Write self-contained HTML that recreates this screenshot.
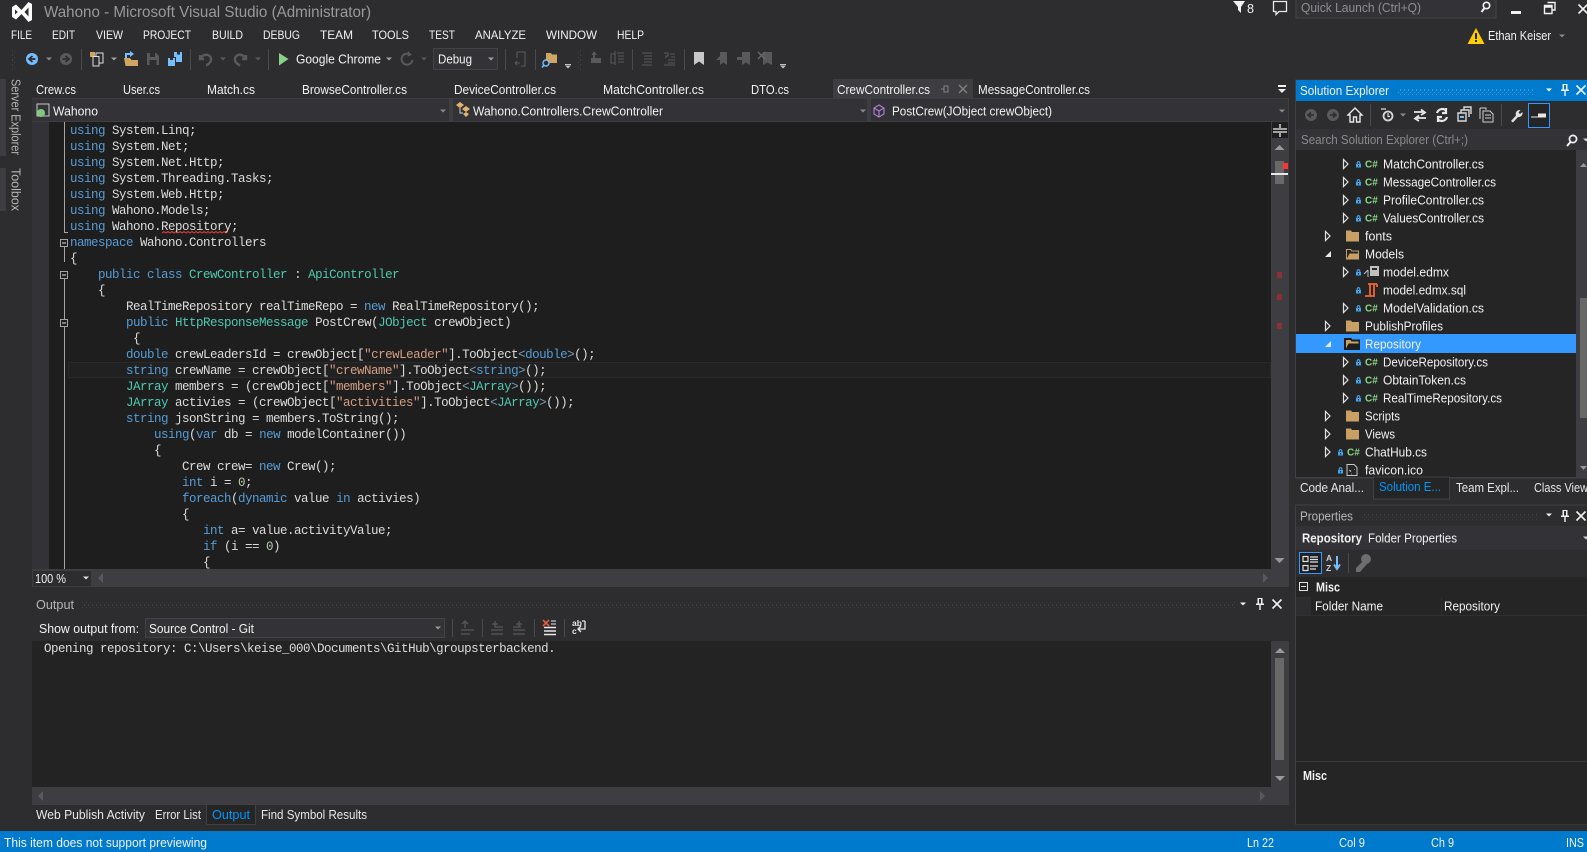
<!DOCTYPE html>
<html lang="en"><head><meta charset="utf-8"><title>Wahono - Microsoft Visual Studio</title>
<style>
html,body{margin:0;padding:0;background:#2d2d30;width:1587px;height:852px;overflow:hidden}
svg{display:block;position:absolute;left:0;top:0}
text{font-family:"Liberation Sans",Arial,sans-serif;font-size:12.5px;fill:#f1f1f1;white-space:pre}
.t{fill:#e6e6e6}.d{fill:#b5b5b5}.g{fill:#8f8f8f}.b{font-weight:bold}
.c text,.c{font-family:"Liberation Mono",monospace;font-size:12.5px;letter-spacing:-.5px;fill:#dcdcdc}
.k{fill:#569cd6}.y{fill:#4ec9b0}.s{fill:#d69d85}.n{fill:#b5cea8}.a{fill:#7d9bb3}
.m{font-size:12px;fill:#f1f1f1}
.dim{fill:#59595c}.dims{stroke:#59595c;fill:none;stroke-width:1.5}
.sep{fill:#4a4a4e}
.w{fill:#e8e8e8}
.cs{font-size:10px;font-weight:bold;fill:#85d885}
</style></head><body>
<svg width="1587" height="852" viewBox="0 0 1587 852" xmlns="http://www.w3.org/2000/svg">
<defs>
<pattern id="dg" width="4" height="5" patternUnits="userSpaceOnUse"><rect width="1" height="1" fill="#3f3f43"/><rect x="2" y="2" width="1" height="1" fill="#3f3f43"/><rect y="4" width="1" height="1" fill="#3f3f43"/></pattern>
<pattern id="db" width="4" height="5" patternUnits="userSpaceOnUse"><rect width="1" height="1" fill="#3a9ad9"/><rect x="2" y="2" width="1" height="1" fill="#3a9ad9"/><rect y="4" width="1" height="1" fill="#3a9ad9"/></pattern>
<g id="dd"><path d="M-3 -1.5H3L0 1.5Z"/></g>
<g id="lk"><path d="M1.2 5V4A1.300 1.300 0 0 1 3.800 4V5" fill="none" stroke="#3fa7f0" stroke-width="1.100"/><rect x="0" y="5" width="5" height="3.500" fill="#3fa7f0"/><rect x="2" y="6" width="1" height="1.500" fill="#252526"/></g>
<path id="tc" d="M0.5 -4.5V4.5L5 0Z" fill="none" stroke="#e0e0e0" stroke-width="1.2"/>
<path id="te" d="M0 3H6V-3Z" fill="#e8e8e8"/>
<path id="fc" d="M0 -5.500H5L6 -4H13V5.500H0Z" fill="#c8a064"/>
<path id="fo" d="M0 5.500V-5H5L6 -3.500H13V5.500ZM1 4.500 3.500 -.5H12V-2.500H5.500L4.500 -4H1Z" fill="#c8a064" fill-rule="evenodd"/>
<g id="pin"><path d="M-2.5 -6H2.5V-.5H4V1H.7V6H-.7V1H-4V-.5H-2.5ZM-1 -5V-.5H1V-5Z" fill="#f1f1f1" fill-rule="evenodd"/></g>
<path id="x" d="M-4.5 -4.5 4.5 4.5M4.5 -4.5 -4.5 4.5" stroke="#f1f1f1" stroke-width="1.6" fill="none"/>
</defs>

<rect width="1587" height="852" fill="#2d2d30"/>

<!-- title bar -->
<path d="M12 7 16 4.5 21.5 10 28.5 2 32 4V20L28.5 22 21.5 14 16 19.5 12 17ZM15 9.5V14.5L17.8 12ZM28.5 7.5 24.5 12 28.5 16.5Z" fill="#fff" fill-rule="evenodd"/>
<text x="44" y="17" textLength="327" lengthAdjust="spacingAndGlyphs" style="font-size:16px;fill:#999">Wahono - Microsoft Visual Studio (Administrator)</text>
<path d="M1233 1H1245L1241 7V13L1238 10V7Z" fill="#f1f1f1"/>
<text x="1247" y="13" textLength="7" lengthAdjust="spacingAndGlyphs">8</text>
<path d="M1273.5 1.5H1286.5V11.5H1279L1276 14.5V11.5H1273.5Z" fill="none" stroke="#e8e8e8" stroke-width="1.3"/>
<rect x="1296" y="-1" width="200" height="19" fill="#333337" stroke="#434346"/>
<text x="1301" y="12" textLength="120" lengthAdjust="spacingAndGlyphs" class="g">Quick Launch (Ctrl+Q)</text>
<circle cx="1486.5" cy="5.5" r="3.2" fill="none" stroke="#f1f1f1" stroke-width="1.6"/><path d="M1484.5 8 1481.5 12" stroke="#f1f1f1" stroke-width="2"/>
<rect x="1511" y="11" width="10" height="3" fill="#f1f1f1"/>
<path d="M1547.5 2.5H1555V10H1552.5M1544.5 5.5H1552V13.5H1544.5ZM1544.5 7H1552" fill="none" stroke="#f1f1f1" stroke-width="1.4"/>
<use href="#x" x="1583" y="9"/>

<!-- menu -->
<g class="mm">
<text class="m" x="11" y="39" textLength="21" lengthAdjust="spacingAndGlyphs">FILE</text>
<text class="m" x="52" y="39" textLength="23" lengthAdjust="spacingAndGlyphs">EDIT</text>
<text class="m" x="96" y="39" textLength="27" lengthAdjust="spacingAndGlyphs">VIEW</text>
<text class="m" x="143" y="39" textLength="48" lengthAdjust="spacingAndGlyphs">PROJECT</text>
<text class="m" x="212" y="39" textLength="31" lengthAdjust="spacingAndGlyphs">BUILD</text>
<text class="m" x="263" y="39" textLength="37" lengthAdjust="spacingAndGlyphs">DEBUG</text>
<text class="m" x="320" y="39" textLength="33" lengthAdjust="spacingAndGlyphs">TEAM</text>
<text class="m" x="372" y="39" textLength="37" lengthAdjust="spacingAndGlyphs">TOOLS</text>
<text class="m" x="429" y="39" textLength="26" lengthAdjust="spacingAndGlyphs">TEST</text>
<text class="m" x="475" y="39" textLength="51" lengthAdjust="spacingAndGlyphs">ANALYZE</text>
<text class="m" x="546" y="39" textLength="51" lengthAdjust="spacingAndGlyphs">WINDOW</text>
<text class="m" x="617" y="39" textLength="27" lengthAdjust="spacingAndGlyphs">HELP</text>
</g>
<path d="M1476 28 1484.5 44H1467.5Z" fill="#ffcc00"/><rect x="1475" y="33" width="2" height="6" fill="#222"/><rect x="1475" y="40" width="2" height="2" fill="#222"/>
<text x="1488" y="40" textLength="63" lengthAdjust="spacingAndGlyphs">Ethan Keiser</text>
<use href="#dd" x="1562" y="36" fill="#8a8a8a"/>

<!-- toolbar -->
<rect x="12" y="50" width="4" height="20" fill="url(#dg)"/>
<circle cx="32" cy="59" r="6" fill="#75beff"/><path d="M35.5 59H30M32.5 56 29 59 32.5 62" stroke="#2d2d30" stroke-width="1.8" fill="none"/>
<use href="#dd" x="49" y="59" fill="#8a8a8a"/>
<circle cx="66" cy="59" r="6" fill="#59595c"/><path d="M62.5 59H68M65.5 56 69 59 65.5 62" stroke="#2d2d30" stroke-width="1.8" fill="none"/>
<rect x="81" y="49" width="1" height="21" class="sep"/>
<rect x="90" y="52" width="5" height="5" fill="#d0a564"/><path d="M93 56.5H99V66H93ZM96 56V53H103V63H99.5" fill="none" stroke="#e0e0e0" stroke-width="1"/>
<use href="#dd" x="114" y="59" fill="#a0a0a0"/>
<path d="M124 58H130L131.5 60H138V66H125.5Z" fill="#d0a564"/><path d="M126 58V54H131" fill="none" stroke="#75beff" stroke-width="2"/><path d="M130 51 134 54 130 57Z" fill="#75beff"/>
<path d="M147 53H156L159 56V65H147ZM150 53V57H155V53ZM149.5 60V65H156.5V60Z" fill="#59595c" fill-rule="evenodd"/>
<path d="M168 58H175V66H168ZM174 52H182V62H176V57H174Z" fill="#75beff"/><rect x="170" y="58" width="3" height="2" fill="#2d2d30"/><rect x="177" y="52" width="3" height="2.5" fill="#2d2d30"/>
<rect x="190" y="49" width="1" height="21" class="sep"/>
<path d="M200 55V59H204M200.5 58.5C203 53.5 210 53.5 211 58.5 211.5 61 209.5 64 206 65.5" class="dims" style="stroke-width:2.4"/>
<use href="#dd" x="223" y="59" fill="#59595c"/>
<path d="M246 55V59H242M245.5 58.5C243 53.5 236 53.5 235 58.5 234.5 61 236.5 64 240 65.5" class="dims" style="stroke-width:2.4"/>
<use href="#dd" x="258" y="59" fill="#59595c"/>
<rect x="268" y="49" width="1" height="21" class="sep"/>
<path d="M279 53 288.5 59 279 65.5Z" fill="#89d185"/>
<text x="296" y="63.500" textLength="85" lengthAdjust="spacingAndGlyphs">Google Chrome</text>
<use href="#dd" x="389" y="59" fill="#a0a0a0"/>
<path d="M410 54.500A5.5 5.500 0 1 0 412.500 60" class="dims" style="stroke-width:2"/><path d="M408 51 412 55 407.500 56.500Z" class="dim"/>
<use href="#dd" x="424" y="59" fill="#59595c"/>
<rect x="433.500" y="48.500" width="64" height="21" fill="#333337" stroke="#434346"/>
<text x="438" y="63.500" textLength="34" lengthAdjust="spacingAndGlyphs">Debug</text>
<use href="#dd" x="491" y="59" fill="#a0a0a0"/>
<rect x="505" y="49" width="1" height="21" class="sep"/>
<path d="M517 58V52H525V66H521M515 63H520M515 63 517 61M515 63 517 65M521 66H525" class="dims" style="stroke-width:1.1"/>
<rect x="535" y="49" width="1" height="21" class="sep"/>
<path d="M546 53H551L552 54.500H557V63H546Z" fill="#d0a564"/>
<circle cx="546" cy="63" r="3" fill="#2d2d30" stroke="#75beff" stroke-width="1.4"/><path d="M544 65 542 67.500" stroke="#75beff" stroke-width="1.5"/>
<rect x="565" y="64" width="6" height="1" fill="#c0c0c0"/><use href="#dd" x="568" y="67" fill="#c0c0c0"/>
<rect x="577" y="50" width="4" height="20" fill="url(#dg)"/>
<path d="M591 58H601V63H591ZM594 51 597 55H595V58H593V55H591.500Z" class="dim" fill-rule="evenodd"/>
<path d="M611 54H615V63H611ZM617 53H624M618 56H624M618 59H624M618 62H624M615 51V65" class="dims" style="stroke-width:1.1"/>
<rect x="632" y="49" width="1" height="21" class="sep"/>
<path d="M642 53H652M644 56H652M644 59H652M644 62H652M642 65H652" class="dims" style="stroke-width:1.1"/>
<path d="M664 53H668V56H666V58M668 60H675M668 63H675M664 65H675M670 54H675M671 57H675" class="dims" style="stroke-width:1.1"/>
<rect x="684" y="49" width="1" height="21" class="sep"/>
<path d="M694 52H704V65L699 61.500 694 65Z" fill="#c8c8c8"/>
<path d="M720 52H727V65L723.500 62.500 720 65V60H716L720 56Z" class="dim"/>
<path d="M742 52H750V65L746 62.500 742 65V60H737V57H742Z" class="dim"/>
<path d="M763 52H772V65L767.500 62.500 763 65Z" class="dim"/><path d="M758 52 765 59M765 52 758 59" stroke="#6a6a6d" stroke-width="1.4"/>
<rect x="780" y="64" width="6" height="1" fill="#c0c0c0"/><use href="#dd" x="783" y="67" fill="#c0c0c0"/>

<!-- left strip -->
<rect x="0" y="79" width="6" height="77" fill="#3e3e42"/>
<rect x="0" y="168" width="6" height="43" fill="#3e3e42"/>
<text transform="translate(11.500,79) rotate(90)" textLength="76" lengthAdjust="spacingAndGlyphs" class="d">Server Explorer</text>
<text transform="translate(11.500,168) rotate(90)" textLength="43" lengthAdjust="spacingAndGlyphs" class="d">Toolbox</text>

<!-- doc tabs -->
<g>
<text x="36" y="94" textLength="40" lengthAdjust="spacingAndGlyphs">Crew.cs</text>
<text x="123" y="94" textLength="37" lengthAdjust="spacingAndGlyphs">User.cs</text>
<text x="207" y="94" textLength="48" lengthAdjust="spacingAndGlyphs">Match.cs</text>
<text x="302" y="94" textLength="105" lengthAdjust="spacingAndGlyphs">BrowseController.cs</text>
<text x="454" y="94" textLength="102" lengthAdjust="spacingAndGlyphs">DeviceController.cs</text>
<text x="603" y="94" textLength="101" lengthAdjust="spacingAndGlyphs">MatchController.cs</text>
<text x="751" y="94" textLength="38" lengthAdjust="spacingAndGlyphs">DTO.cs</text>
<rect x="833" y="79" width="140" height="19" fill="#3e3e42"/>
<text x="837" y="94" textLength="93" lengthAdjust="spacingAndGlyphs">CrewController.cs</text>
<path d="M941 89H944M944 86V92H948V86ZM948 89H948" fill="none" stroke="#808080"/>
<path d="M959 85 967 93M967 85 959 93" stroke="#808080" stroke-width="1.4"/>
<text x="978" y="94" textLength="112" lengthAdjust="spacingAndGlyphs">MessageController.cs</text>
<rect x="1278" y="85" width="8" height="2" fill="#f1f1f1"/><path d="M1278 89H1286L1282 93Z" fill="#f1f1f1"/>
</g>

<!-- nav bar -->
<rect x="32" y="98" width="1257" height="24" fill="#3e3e42"/>
<rect x="32" y="99" width="417" height="22" fill="#333337"/>
<rect x="453" y="99" width="414" height="22" fill="#333337"/>
<rect x="871" y="99" width="417" height="22" fill="#333337"/>
<rect x="37" y="104" width="12" height="12" fill="none" stroke="#c8c8c8"/><circle cx="41" cy="113" r="4" fill="#7fc97f"/>
<text x="53" y="115.500" textLength="45" lengthAdjust="spacingAndGlyphs">Wahono</text>
<use href="#dd" x="443" y="111" fill="#8a8a8a"/>
<path d="M456 105 460 102 464 105 460 108ZM462 109 466 106 470 109 466 112ZM463 114 466 112 469 114 466 117Z" fill="#e2b36f"/><path d="M460 108V113H463" fill="none" stroke="#d0d0d0"/>
<text x="473" y="115.500" textLength="190" lengthAdjust="spacingAndGlyphs">Wahono.Controllers.CrewController</text>
<use href="#dd" x="863" y="111" fill="#8a8a8a"/>
<path d="M879 105 884 108V114L879 117 874 114V108ZM874 108 879 111 884 108M879 111V117" fill="none" stroke="#b180d7" stroke-width="1.1"/>
<text x="892" y="115.500" textLength="160" lengthAdjust="spacingAndGlyphs">PostCrew(JObject crewObject)</text>
<use href="#dd" x="1282" y="111" fill="#8a8a8a"/>

<!-- editor -->
<rect x="32" y="122" width="17" height="447" fill="#333337"/>
<rect x="49" y="122" width="1222" height="447" fill="#1e1e1e"/>
<rect x="68.500" y="362.500" width="1202" height="15" fill="#212122" stroke="#2a2a2c"/>
<path d="M64.500 122V232.500H68" fill="none" stroke="#a5a5a5"/>
<path d="M64.500 246V262M64.500 278V326M64.500 326V569" fill="none" stroke="#a5a5a5"/>
<g fill="#1e1e1e" stroke="#a5a5a5"><rect x="60.500" y="239.500" width="7" height="7"/><rect x="60.500" y="271.500" width="7" height="7"/><rect x="60.500" y="319.500" width="7" height="7"/></g>
<path d="M62 243H66M62 275H66M62 323H66" stroke="#e0e0e0"/>
<path d="M162 233l2 -1.500 2 1.500 2 -1.500 2 1.500 2 -1.500 2 1.500 2 -1.500 2 1.500 2 -1.500 2 1.500 2 -1.500 2 1.500 2 -1.500 2 1.500 2 -1.500 2 1.500 2 -1.500 2 1.500 2 -1.500 2 1.500 2 -1.500 2 1.500 2 -1.500 2 1.500 2 -1.500 2 1.500 2 -1.500 2 1.500 2 -1.500 2 1.500 2 -1.500 2 1.500 2 -1.500" fill="none" stroke="#e0403a"/>
<svg x="49" y="122" width="1222" height="447" viewBox="49 122 1222 447">
<g class="c">
<text x="70" y="134"><tspan class="k">using</tspan> System.Linq;</text>
<text x="70" y="150"><tspan class="k">using</tspan> System.Net;</text>
<text x="70" y="166"><tspan class="k">using</tspan> System.Net.Http;</text>
<text x="70" y="182"><tspan class="k">using</tspan> System.Threading.Tasks;</text>
<text x="70" y="198"><tspan class="k">using</tspan> System.Web.Http;</text>
<text x="70" y="214"><tspan class="k">using</tspan> Wahono.Models;</text>
<text x="70" y="230"><tspan class="k">using</tspan> Wahono.Repository;</text>
<text x="70" y="246"><tspan class="k">namespace</tspan> Wahono.Controllers</text>
<text x="70" y="262">{</text>
<text x="98" y="278"><tspan class="k">public class</tspan> <tspan class="y">CrewController</tspan> : <tspan class="y">ApiController</tspan></text>
<text x="98" y="294">{</text>
<text x="126" y="310">RealTimeRepository realTimeRepo = <tspan class="k">new</tspan> RealTimeRepository();</text>
<text x="126" y="326"><tspan class="k">public</tspan> <tspan class="y">HttpResponseMessage</tspan> PostCrew(<tspan class="y">JObject</tspan> crewObject)</text>
<text x="133" y="342">{</text>
<text x="126" y="358"><tspan class="k">double</tspan> crewLeadersId = crewObject[<tspan class="s">"crewLeader"</tspan>].ToObject<tspan class="a">&lt;</tspan><tspan class="k">double</tspan><tspan class="a">&gt;</tspan>();</text>
<text x="126" y="374"><tspan class="k">string</tspan> crewName = crewObject[<tspan class="s">"crewName"</tspan>].ToObject<tspan class="a">&lt;</tspan><tspan class="k">string</tspan><tspan class="a">&gt;</tspan>();</text>
<text x="126" y="390"><tspan class="y">JArray</tspan> members = (crewObject[<tspan class="s">"members"</tspan>].ToObject<tspan class="a">&lt;</tspan><tspan class="y">JArray</tspan><tspan class="a">&gt;</tspan>());</text>
<text x="126" y="406"><tspan class="y">JArray</tspan> activies = (crewObject[<tspan class="s">"activities"</tspan>].ToObject<tspan class="a">&lt;</tspan><tspan class="y">JArray</tspan><tspan class="a">&gt;</tspan>());</text>
<text x="126" y="422"><tspan class="k">string</tspan> jsonString = members.ToString();</text>
<text x="154" y="438"><tspan class="k">using</tspan>(<tspan class="k">var</tspan> db = <tspan class="k">new</tspan> modelContainer())</text>
<text x="154" y="454">{</text>
<text x="182" y="470">Crew crew= <tspan class="k">new</tspan> Crew();</text>
<text x="182" y="486"><tspan class="k">int</tspan> i = <tspan class="n">0</tspan>;</text>
<text x="182" y="502"><tspan class="k">foreach</tspan>(<tspan class="k">dynamic</tspan> value <tspan class="k">in</tspan> activies)</text>
<text x="182" y="518">{</text>
<text x="203" y="534"><tspan class="k">int</tspan> a= value.activityValue;</text>
<text x="203" y="550"><tspan class="k">if</tspan> (i == <tspan class="n">0</tspan>)</text>
<text x="203" y="566">{</text>
</g>
</svg>

<!-- editor scrollbar -->
<rect x="1271" y="122" width="18" height="447" fill="#3e3e42"/>
<rect x="1272" y="122" width="16" height="16" fill="#1e1e1e"/>
<path d="M1273 129H1287M1273 132H1287M1280 124V128M1280 133V137" stroke="#f1f1f1" stroke-width="1.3"/>
<path d="M1274.500 150H1284.500L1279.500 145Z" fill="#999"/>
<rect x="1275" y="161" width="9" height="23" fill="#686868"/>
<rect x="1283" y="163" width="5" height="6" fill="#ff3333"/>
<rect x="1271" y="173" width="17" height="2" fill="#e8e8e8"/>
<g fill="#8a3038"><rect x="1277" y="272" width="5" height="6"/><rect x="1277" y="294" width="5" height="6"/><rect x="1277" y="323" width="5" height="6"/></g>
<path d="M1274.500 558H1284.500L1279.500 563Z" fill="#999"/>

<!-- editor hscroll -->
<rect x="32" y="569" width="1257" height="18" fill="#3e3e42"/>
<rect x="33" y="571" width="58" height="15" fill="#2d2d30"/>
<text x="35" y="583" textLength="31" lengthAdjust="spacingAndGlyphs">100 %</text>
<use href="#dd" x="86" y="578" fill="#e0e0e0"/>
<path d="M103 573V583L98 578Z" fill="#59595c"/>
<path d="M1263 573V583L1268 578Z" fill="#59595c"/>

<!-- output panel -->
<text x="36" y="609" textLength="38" lengthAdjust="spacingAndGlyphs" class="d">Output</text>
<rect x="82" y="601" width="1154" height="7" fill="url(#dg)"/>
<use href="#dd" x="1243" y="604" fill="#f1f1f1"/>
<use href="#pin" x="1260" y="604"/>
<use href="#x" x="1277" y="604"/>
<text x="39" y="633" textLength="100" lengthAdjust="spacingAndGlyphs">Show output from:</text>
<rect x="145.500" y="618.500" width="299" height="19" fill="#333337" stroke="#434346"/>
<text x="149" y="633" textLength="105" lengthAdjust="spacingAndGlyphs">Source Control - Git</text>
<use href="#dd" x="438" y="628" fill="#999"/>
<rect x="452" y="619" width="1" height="18" class="sep"/><rect x="482" y="619" width="1" height="18" class="sep"/><rect x="534" y="619" width="1" height="18" class="sep"/><rect x="564" y="619" width="1" height="18" class="sep"/>
<path d="M461 630H474M461 634H470M465 621V628M462 624 465 621 468 624" class="dims" style="stroke-width:1.3"/>
<path d="M491 630H503M491 634H503M495 627H503M495 621V627M492 624H498" class="dims" style="stroke-width:1.3"/>
<path d="M513 630H525M513 634H525M513 627H521M519 621V627M516 624H522" class="dims" style="stroke-width:1.3"/>
<path d="M544 631H556M544 634.500H556M544 627.500H556" stroke="#e8e8e8" stroke-width="1.6"/><path d="M543 620 549 626M549 620 543 626" stroke="#e85a3c" stroke-width="1.6"/><path d="M551 621H556M551 624H556" stroke="#e8e8e8"/>
<text x="572" y="626" style="font-size:8.5px;font-weight:bold;fill:#e8e8e8">ab</text>
<text x="572" y="634" style="font-size:8.5px;font-weight:bold;fill:#e8e8e8">c</text>
<path d="M585 621V629H578M581 626 578 629 581 632M582 621H585" fill="none" stroke="#e8e8e8" stroke-width="1.3"/>

<rect x="32" y="641" width="1239" height="146" fill="#232324"/>
<text x="44" y="652" class="c">Opening repository: C:\Users\keise_000\Documents\GitHub\groupsterbackend.</text>
<rect x="1271" y="641" width="18" height="146" fill="#3e3e42"/>
<path d="M1275 653H1285L1280 648Z" fill="#999"/>
<rect x="1275" y="658" width="9" height="102" fill="#686868"/>
<path d="M1275 776H1285L1280 781Z" fill="#999"/>
<rect x="32" y="787" width="1257" height="18" fill="#3e3e42"/>
<path d="M43 791V801L38 796Z" fill="#59595c"/>
<path d="M1260 791V801L1265 796Z" fill="#59595c"/>

<!-- bottom tabs -->
<text x="36" y="819" textLength="109" lengthAdjust="spacingAndGlyphs" class="t">Web Publish Activity</text>
<text x="155" y="819" textLength="46" lengthAdjust="spacingAndGlyphs" class="t">Error List</text>
<rect x="206.500" y="804.500" width="49" height="20" fill="#252526" stroke="#3f3f46"/>
<text x="212" y="819" textLength="38" lengthAdjust="spacingAndGlyphs" style="fill:#0097fb">Output</text>
<text x="261" y="819" textLength="106" lengthAdjust="spacingAndGlyphs" class="t">Find Symbol Results</text>

<!-- status bar -->
<rect y="831" width="1587" height="21" fill="#007acc"/>
<text x="4" y="847" textLength="203" lengthAdjust="spacingAndGlyphs">This item does not support previewing</text>
<text x="1247" y="847" textLength="27" lengthAdjust="spacingAndGlyphs">Ln 22</text>
<text x="1339" y="847" textLength="26" lengthAdjust="spacingAndGlyphs">Col 9</text>
<text x="1431" y="847" textLength="23" lengthAdjust="spacingAndGlyphs">Ch 9</text>
<text x="1566" y="847" textLength="18" lengthAdjust="spacingAndGlyphs">INS</text>

<!-- solution explorer -->
<rect x="1295.500" y="80" width="292" height="398" fill="#2d2d30" stroke="#3f3f46"/>
<rect x="1296" y="80" width="291" height="21" fill="#007acc"/>
<text x="1300" y="95" textLength="89" lengthAdjust="spacingAndGlyphs">Solution Explorer</text>
<rect x="1397" y="88" width="136" height="7" fill="url(#db)"/>
<use href="#dd" x="1549" y="90" fill="#fff"/><use href="#pin" x="1565" y="90"/><use href="#x" x="1581" y="90"/>
<!-- se toolbar -->
<circle cx="1311" cy="115" r="6" fill="#59595c"/><path d="M1314 115H1309M1311 112.500 1308 115 1311 117.500" stroke="#2d2d30" stroke-width="1.6" fill="none"/>
<circle cx="1333" cy="115" r="6" fill="#59595c"/><path d="M1330 115H1335M1333 112.500 1336 115 1333 117.500" stroke="#2d2d30" stroke-width="1.6" fill="none"/>
<path d="M1355 108 1348 115H1350V122H1353.500V117H1356.500V122H1360V115H1362Z" fill="none" stroke="#e8e8e8" stroke-width="1.4"/>
<rect x="1370" y="104" width="1" height="22" class="sep"/>
<circle cx="1388" cy="116" r="4.500" fill="none" stroke="#d8d8d8" stroke-width="1.8"/><path d="M1381 109H1386M1388 113V116.500H1390" stroke="#d8d8d8" stroke-width="1.2" fill="none"/>
<use href="#dd" x="1403" y="115" fill="#8a8a8a"/>
<path d="M1414 112H1423M1421 109.500 1425 112.500 1421 115M1426 118H1417M1419 115.500 1415 118.500 1419 121" fill="none" stroke="#e8e8e8" stroke-width="1.8"/>
<path d="M1437 113A5.500 5.500 0 0 1 1446 110.500M1447 117A5.500 5.500 0 0 1 1438 119.500M1446 108V113H1442M1438 122V117H1442" fill="none" stroke="#e8e8e8" stroke-width="2.2"/>
<path d="M1458 113H1466V121H1458ZM1461 113V110H1469V117M1464 110V107H1471V114" fill="none" stroke="#d8d8d8" stroke-width="1.4"/><rect x="1460" y="116" width="4" height="2" fill="#75beff"/>
<path d="M1480 108H1486V110M1480 108V119M1483 111H1490L1493 114V122H1483ZM1485 115H1491M1485 118H1491" fill="none" stroke="#d0d0d0"/>
<rect x="1501" y="104" width="1" height="22" class="sep"/>
<path d="M1511 121 1516 115.500C1515 113 1516.500 109.500 1520.500 110L1518.500 112.500 1520 114 1522.500 112C1523 116 1520 117.500 1518 117L1513 122.500Z" fill="#e0e0e0"/>
<rect x="1528.500" y="103.500" width="21" height="24" fill="#252526" stroke="#3399ff"/>
<path d="M1531 117.500H1546V113.500H1538V116.500H1531Z" fill="#e8e8e8"/>
<!-- search -->
<rect x="1296" y="129" width="291" height="21" fill="#333337"/>
<text x="1301" y="144" textLength="167" lengthAdjust="spacingAndGlyphs" style="fill:#8a8a8a">Search Solution Explorer (Ctrl+;)</text>
<circle cx="1573" cy="139" r="3.600" fill="none" stroke="#f1f1f1" stroke-width="1.700"/><path d="M1570.500 142 1567 146" stroke="#f1f1f1" stroke-width="2"/>
<use href="#dd" x="1586" y="140" fill="#d0d0d0"/>
<!-- tree -->
<rect x="1296" y="150" width="280" height="327" fill="#252526"/>
<rect x="1296" y="334" width="280" height="19" fill="#3399ff"/>
<rect x="1576" y="150" width="11" height="327" fill="#3e3e42"/>
<path d="M1580 167H1587L1583.500 163Z" fill="#999"/>
<rect x="1580" y="298" width="7" height="120" fill="#686868"/>
<path d="M1580 466H1587L1583.500 470Z" fill="#999"/>
<use href="#tc" x="1343" y="164"/><use href="#lk" x="1356" y="159"/><text class="cs" x="1365" y="167.500">C#</text><text x="1383" y="168.500" textLength="101" lengthAdjust="spacingAndGlyphs">MatchController.cs</text>
<use href="#tc" x="1343" y="182"/><use href="#lk" x="1356" y="177"/><text class="cs" x="1365" y="185.500">C#</text><text x="1383" y="186.500" textLength="113" lengthAdjust="spacingAndGlyphs">MessageController.cs</text>
<use href="#tc" x="1343" y="200"/><use href="#lk" x="1356" y="195"/><text class="cs" x="1365" y="203.500">C#</text><text x="1383" y="204.500" textLength="101" lengthAdjust="spacingAndGlyphs">ProfileController.cs</text>
<use href="#tc" x="1343" y="218"/><use href="#lk" x="1356" y="213"/><text class="cs" x="1365" y="221.500">C#</text><text x="1383" y="222.500" textLength="101" lengthAdjust="spacingAndGlyphs">ValuesController.cs</text>
<use href="#tc" x="1325" y="236"/><use href="#fc" x="1346" y="236"/><text x="1365" y="240.500" textLength="27" lengthAdjust="spacingAndGlyphs">fonts</text>
<use href="#te" x="1325" y="254"/><use href="#fo" x="1346" y="254"/><text x="1365" y="258.500" textLength="39" lengthAdjust="spacingAndGlyphs">Models</text>
<use href="#tc" x="1343" y="272"/><use href="#lk" x="1356" y="267"/><rect x="1370" y="266" width="9" height="10" fill="#c0c0c0"/><rect x="1372" y="268" width="5" height="2" fill="#252526"/><path d="M1364 274 1368 270M1368 270V277" stroke="#c0c0c0" fill="none"/><text x="1383" y="276.500" textLength="66" lengthAdjust="spacingAndGlyphs">model.edmx</text>
<use href="#lk" x="1356" y="285"/><path d="M1368 284H1377M1370 284V296H1365M1374 284V296H1370M1377 284V287" fill="none" stroke="#f0652f" stroke-width="1.800"/><text x="1383" y="294.500" textLength="83" lengthAdjust="spacingAndGlyphs">model.edmx.sql</text>
<use href="#tc" x="1343" y="308"/><use href="#lk" x="1356" y="303"/><text class="cs" x="1365" y="311.500">C#</text><text x="1383" y="312.500" textLength="101" lengthAdjust="spacingAndGlyphs">ModelValidation.cs</text>
<use href="#tc" x="1325" y="326"/><use href="#fc" x="1346" y="326"/><text x="1365" y="330.500" textLength="78" lengthAdjust="spacingAndGlyphs">PublishProfiles</text>
<use href="#te" x="1325" y="344"/>
<path d="M1344.500 349.500V338.500H1351L1352 340H1359.500V349.500Z" fill="#1e1e1e" stroke="#1e1e1e"/><path d="M1346 348.500 1348.500 343.500H1358.500V341.500H1351.500L1350.500 340H1346Z" fill="#c8a064"/>
<text x="1365" y="348.500" textLength="56" lengthAdjust="spacingAndGlyphs">Repository</text>
<use href="#tc" x="1343" y="362"/><use href="#lk" x="1356" y="357"/><text class="cs" x="1365" y="365.500">C#</text><text x="1383" y="366.500" textLength="105" lengthAdjust="spacingAndGlyphs">DeviceRepository.cs</text>
<use href="#tc" x="1343" y="380"/><use href="#lk" x="1356" y="375"/><text class="cs" x="1365" y="383.500">C#</text><text x="1383" y="384.500" textLength="83" lengthAdjust="spacingAndGlyphs">ObtainToken.cs</text>
<use href="#tc" x="1343" y="398"/><use href="#lk" x="1356" y="393"/><text class="cs" x="1365" y="401.500">C#</text><text x="1383" y="402.500" textLength="119" lengthAdjust="spacingAndGlyphs">RealTimeRepository.cs</text>
<use href="#tc" x="1325" y="416"/><use href="#fc" x="1346" y="416"/><text x="1365" y="420.500" textLength="35" lengthAdjust="spacingAndGlyphs">Scripts</text>
<use href="#tc" x="1325" y="434"/><use href="#fc" x="1346" y="434"/><text x="1365" y="438.500" textLength="30" lengthAdjust="spacingAndGlyphs">Views</text>
<use href="#tc" x="1325" y="452"/><use href="#lk" x="1338" y="447"/><text class="cs" x="1347" y="455.500">C#</text><text x="1365" y="456.500" textLength="62" lengthAdjust="spacingAndGlyphs">ChatHub.cs</text>
<use href="#lk" x="1338" y="465"/><path d="M1347 464.500H1354L1357 467.500V475.500H1347Z" fill="none" stroke="#c8c8c8"/><path d="M1349.500 470 1351 471.500M1351 474H1351.500M1354 469.500H1354.500" stroke="#e8e8e8"/><text x="1365" y="474.500" textLength="58" lengthAdjust="spacingAndGlyphs">favicon.ico</text>

<!-- se tabs -->
<rect x="1296" y="477" width="291" height="1" fill="#3f3f46"/>
<text x="1300" y="492" textLength="64" lengthAdjust="spacingAndGlyphs" class="t">Code Anal...</text>
<rect x="1373.500" y="477" width="76" height="22" fill="#252526" stroke="#3f3f46"/>
<text x="1379" y="491" textLength="62" lengthAdjust="spacingAndGlyphs" style="fill:#0097fb">Solution E...</text>
<text x="1456" y="492" textLength="63" lengthAdjust="spacingAndGlyphs" class="t">Team Expl...</text>
<text x="1534" y="492" textLength="54" lengthAdjust="spacingAndGlyphs" class="t">Class View</text>

<!-- properties -->
<rect x="1296" y="505" width="291" height="1" fill="#3f3f46"/>
<rect x="1295.500" y="505" width="292" height="319" fill="#2d2d30" stroke="#3f3f46"/>
<text x="1300" y="520.500" textLength="53" lengthAdjust="spacingAndGlyphs" class="d">Properties</text>
<rect x="1361" y="513" width="177" height="7" fill="url(#dg)"/>
<use href="#dd" x="1549" y="515" fill="#f1f1f1"/><use href="#pin" x="1565" y="516"/><use href="#x" x="1581" y="516"/>
<rect x="1296" y="526" width="291" height="24" fill="#333337"/>
<text x="1302" y="542.500" textLength="60" lengthAdjust="spacingAndGlyphs" class="b">Repository</text>
<text x="1368" y="542.500" textLength="89" lengthAdjust="spacingAndGlyphs">Folder Properties</text>
<use href="#dd" x="1586" y="538" fill="#d0d0d0"/>
<rect x="1299.500" y="552.500" width="22" height="21" fill="#1e1e1e" stroke="#3399ff"/>
<path d="M1303 556.500H1308V561.500H1303ZM1303 565.500H1308V570.500H1303ZM1310 557H1318M1310 559.500H1318M1310 562H1318M1310 566H1318M1310 569H1316" fill="none" stroke="#e0e0e0" stroke-width="1.200"/>
<text x="1326" y="561" style="font-size:8.5px;font-weight:bold;fill:#d0d0d0">A</text>
<text x="1326" y="571" style="font-size:8.5px;font-weight:bold;fill:#d0d0d0">Z</text>
<path d="M1337 556V568M1334 564.500 1337 569 1340 564.500" fill="none" stroke="#75beff" stroke-width="2"/>
<rect x="1348" y="553" width="1" height="20" class="sep"/>
<circle cx="1366" cy="559" r="5" fill="#6d6d70"/><path d="M1363 561 1356 568V572H1360L1367 564Z" fill="#6d6d70"/>
<rect x="1296" y="577" width="291" height="247" fill="#252526"/>
<rect x="1299.500" y="582.500" width="8" height="8" fill="none" stroke="#e0e0e0"/><path d="M1301 586.500H1306" stroke="#e0e0e0"/>
<text x="1316" y="591.500" textLength="24" lengthAdjust="spacingAndGlyphs" class="b">Misc</text>
<rect x="1296" y="597" width="15" height="19" fill="#2d2d30"/>
<rect x="1296" y="615" width="291" height="1" fill="#303033"/>
<rect x="1441" y="597" width="1" height="18" fill="#303033"/>
<text x="1315" y="610.500" textLength="68" lengthAdjust="spacingAndGlyphs">Folder Name</text>
<text x="1444" y="610.500" textLength="56" lengthAdjust="spacingAndGlyphs">Repository</text>
<rect x="1296" y="761" width="291" height="1" fill="#3a3a3d"/>
<text x="1303" y="780" textLength="24" lengthAdjust="spacingAndGlyphs" class="b">Misc</text>
</svg>
</body></html>
